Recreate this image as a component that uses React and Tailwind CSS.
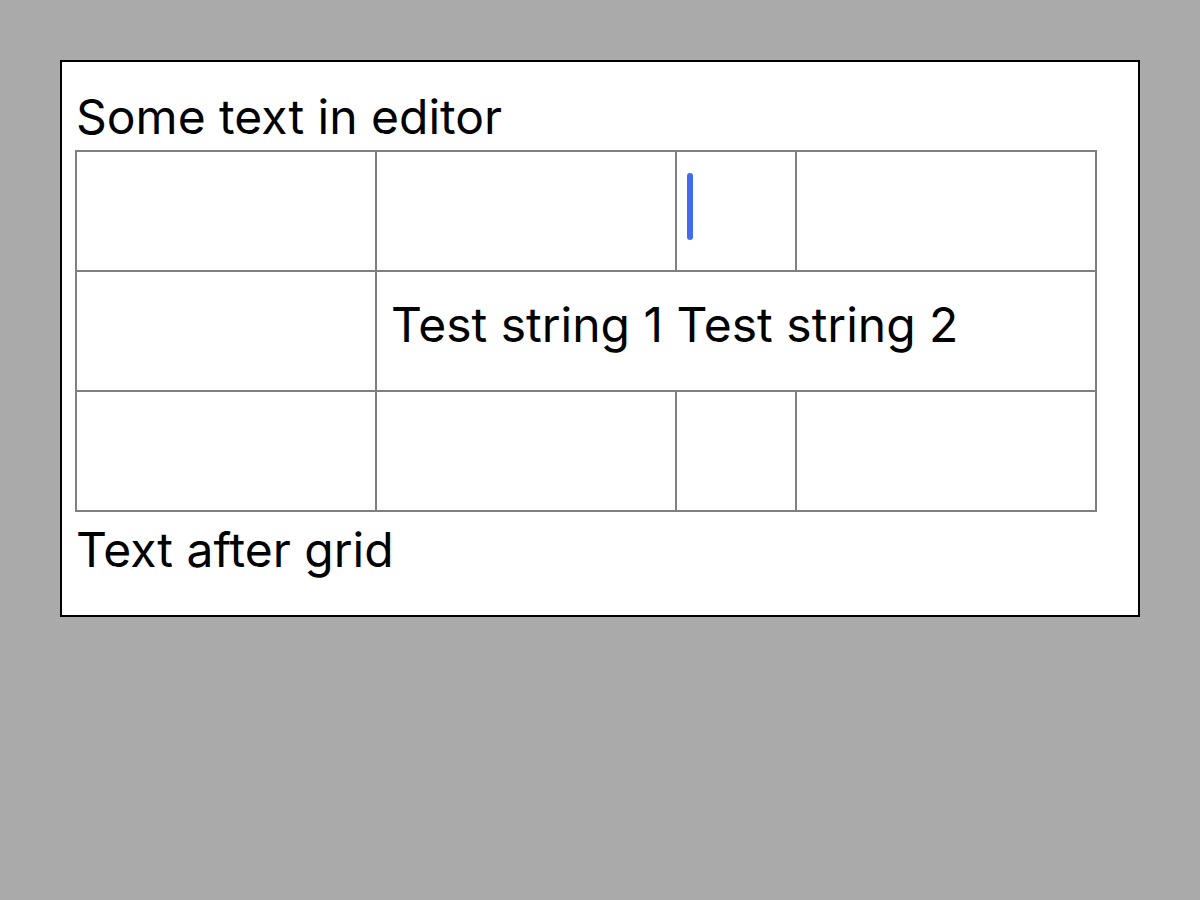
export default function App() {
  return (
    <div className="min-h-[900px] bg-[#aaaaaa] pt-[60px] px-[60px] font-['Inter','Liberation_Sans',sans-serif] text-black">
      {/* editor */}
      <div className="w-[1080px] border-2 border-black bg-white pt-[27px] pb-[37px] px-[13px]">
        <p className="text-[48px] leading-[56px] pl-[1px]">Some text in editor</p>

        <div className="mt-[5px] grid w-fit grid-cols-[298px_298px_118px_298px] grid-rows-[118px_118px_118px] gap-[2px] bg-[#808080] p-[2px]">
          {/* row 1 */}
          <div className="bg-white" />
          <div className="bg-white" />
          <div className="bg-white pl-[10px] pt-[21px]">
            <div className="h-[67px] w-[6px] rounded-full bg-[#426bf0]" />
          </div>
          <div className="bg-white" />

          {/* row 2 */}
          <div className="bg-white" />
          <div className="col-span-3 bg-white pl-[14px] pt-[25px]">
            <p className="text-[48px] leading-[56px] whitespace-nowrap">
              Test string 1 Test string 2
            </p>
          </div>

          {/* row 3 */}
          <div className="bg-white" />
          <div className="bg-white" />
          <div className="bg-white" />
          <div className="bg-white" />
        </div>

        <p className="mt-[10px] text-[48px] leading-[56px] pl-[1px]">Text after grid</p>
      </div>
    </div>
  );
}
